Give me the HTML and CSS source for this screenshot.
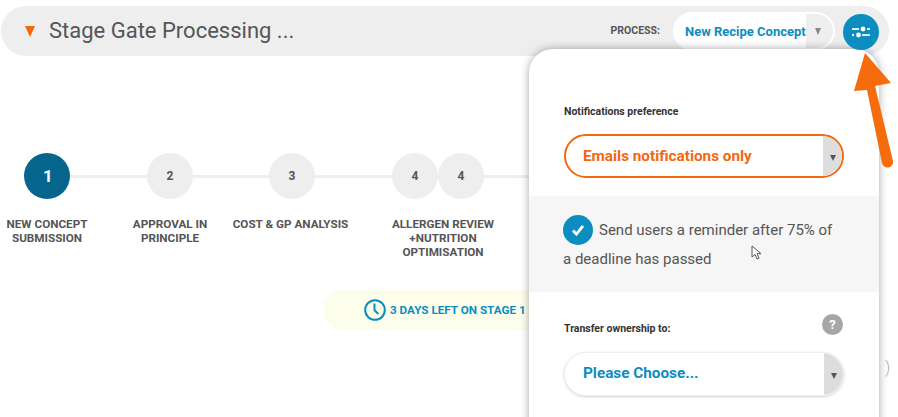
FILE: index.html
```html
<!DOCTYPE html>
<html lang="en">
<head>
<meta charset="utf-8">
<title>Stage Gate Processing</title>
<link rel="stylesheet" href="styles.css">
</head>
<body>
<div class="page">
  <header class="bar">
    <span class="caret"></span>
    <h1 class="title">Stage Gate Processing ...</h1>
    <span class="process-label">PROCESS:</span>
    <div class="process-select">
      <span class="process-value">New Recipe Concept</span>
      <span class="process-arrow"><i class="tri tri-grey"></i></span>
    </div>
    <button class="settings" aria-label="Settings">
      <svg width="18" height="12" viewBox="0 0 18 12">
        <g fill="#fff">
          <rect x="0" y="2.200" width="7" height="1.700"/>
          <circle cx="11" cy="3" r="2.400"/>
          <rect x="15" y="2.200" width="3" height="1.700"/>
          <circle cx="1" cy="9" r="1.200"/>
          <circle cx="6.500" cy="9" r="2.400"/>
          <rect x="10" y="8.200" width="8" height="1.700"/>
        </g>
      </svg>
    </button>
  </header>

  <section class="stepper">
    <div class="step step-1">
      <span class="dot dot-active">1</span>
      <span class="step-label">NEW CONCEPT SUBMISSION</span>
    </div>
    <div class="step step-2">
      <span class="dot">2</span>
      <span class="step-label">APPROVAL IN PRINCIPLE</span>
    </div>
    <div class="step step-3">
      <span class="dot">3</span>
      <span class="step-label">COST &amp; GP ANALYSIS</span>
    </div>
    <div class="step step-4">
      <div class="dot-pair"><span class="dot">4</span><span class="dot">4</span></div>
      <span class="step-label">ALLERGEN REVIEW +NUTRITION OPTIMISATION</span>
    </div>
  </section>

  <div class="deadline">
    <svg width="24" height="24" viewBox="0 0 24 24" fill="none" stroke="#0b8dc0" stroke-width="2">
      <circle cx="12" cy="12" r="9.800"/>
      <path d="M11.500 5.500v6.800l4 3.600"/>
    </svg>
    <span>3 DAYS LEFT ON STAGE 1</span>
  </div>

  <span class="edge-text">)</span>

  <aside class="panel">
    <div class="panel-block pref">
      <label class="field-label">Notifications preference</label>
      <div class="select select-orange">
        <span>Emails notifications only</span>
        <span class="select-arrow"><i class="tri tri-dark"></i></span>
      </div>
    </div>
    <div class="reminder">
      <span class="check">
        <svg width="16" height="14" viewBox="0 0 16 14"><path d="M3 7.500l3.400 3.600L13 2.800" fill="none" stroke="#fff" stroke-width="2.800"/></svg>
      </span>Send users a reminder after 75% of a deadline has passed
    </div>
    <div class="panel-block transfer">
      <div class="transfer-head">
        <label class="field-label">Transfer ownership to:</label>
        <span class="help">?</span>
      </div>
      <div class="select select-plain">
        <span>Please Choose...</span>
        <span class="select-arrow"><i class="tri tri-dark"></i></span>
      </div>
    </div>
  </aside>

  <svg class="cursor" width="12" height="16" viewBox="0 0 12 16">
    <path d="M1 1v11l3-2.600 2 4.600 2-.8-2-4.500h4z" fill="#fff" stroke="#555" stroke-width="1"/>
  </svg>

  <svg class="arrow" width="48" height="120" viewBox="0 0 48 120">
    <path d="M15 3L41 33 25 36 43 111a5.500 5.500 0 0 1-11 2L17 40 4 41z" fill="#f46c0c"/>
  </svg>
</div>
</body>
</html>
```
FILE: styles.css
```css
* { box-sizing: border-box; }
html, body { margin: 0; padding: 0; background: #fff; }
.page {
  position: relative;
  width: 898px;
  height: 417px;
  overflow: hidden;
  font-family: Roboto, "Liberation Sans", sans-serif;
  color: #555;
}
.bar {
  margin: 6px 9px 0 1px;
  height: 50px;
  border-radius: 25px;
  background: #eee;
  display: flex;
  align-items: center;
  padding: 0 10px 0 24px;
}
.caret {
  width: 0; height: 0;
  border-left: 5px solid transparent;
  border-right: 5px solid transparent;
  border-top: 11px solid #f4670f;
  margin-right: 14px;
}
.title {
  margin: 0 0 2px;
  flex: 1;
  font-size: 22px;
  font-weight: 400;
  color: #555;
}
.process-label {
  font-size: 10.5px;
  font-weight: 700;
  color: #555;
  margin: -2px 13px 0 0;
}
.process-select {
  width: 162px;
  height: 38px;
  border-radius: 19px;
  background: #fff;
  border: 2px solid #fff;
  display: flex;
  align-items: stretch;
  overflow: hidden;
  margin-right: 8px;
}
.process-value {
  flex: 1;
  font-size: 13px;
  font-weight: 700;
  color: #0b8dc0;
  line-height: 35px;
  padding-left: 10px;
  white-space: nowrap;
}
.process-arrow {
  width: 27px;
  background: #eee;
  display: flex;
  align-items: center;
  justify-content: center;
  padding-right: 4px;
}
.tri { display: block; width: 0; height: 0; border-left: 3.5px solid transparent; border-right: 3.5px solid transparent; }
.tri-grey { border-top: 7px solid #888; }
.tri-dark { border-top: 6px solid #555; }
.settings {
  position: relative;
  z-index: 2;
  width: 36px;
  height: 36px;
  border: 0;
  padding: 0;
  margin-top: 2px;
  border-radius: 50%;
  background: #0b8dc0;
  display: flex;
  align-items: center;
  justify-content: center;
}
.stepper {
  position: absolute;
  left: 0; top: 153px;
  width: 540px;
  height: 110px;
}
.stepper::before {
  content: "";
  position: absolute;
  left: 48px; right: 0; top: 22px;
  height: 3px;
  background: #eee;
}
.step {
  position: absolute;
  top: 0;
  display: flex;
  flex-direction: column;
  align-items: center;
  text-align: center;
}
.step-1 { left: 0; width: 94px; }
.step-2 { left: 123px; width: 94px; }
.step-3 { left: 229px; width: 126px; }
.step-4 { left: 387px; width: 112px; }
.dot {
  position: relative;
  flex: none;
  width: 46px;
  height: 46px;
  border-radius: 50%;
  background: #eee;
  font-size: 12px;
  font-weight: 700;
  color: #555;
  display: flex;
  align-items: center;
  justify-content: center;
  padding-bottom: 1px;
}
.dot-active { background: #05658c; color: #fff; font-size: 17px; padding-left: 2px; }
.dot-pair { display: flex; margin-left: -10px; }
.step-label {
  margin-top: 18px;
  font-size: 11.7px;
  font-weight: 700;
  line-height: 14px;
  color: #555;
}
.step-1 .step-label { width: 94px; }
.step-2 .step-label { width: 80px; }
.step-3 .step-label { margin-right: 3px; }
.step-4 .step-label { width: 112px; }
.deadline {
  position: absolute;
  left: 323px; top: 290px;
  width: 230px;
  height: 40px;
  border-radius: 20px;
  background: #fdfdec;
  display: flex;
  align-items: center;
  padding-left: 40px;
  gap: 3px;
  font-size: 11.7px;
  font-weight: 700;
  color: #0b8dc0;
  white-space: nowrap;
}
.deadline svg { flex: none; }
.edge-text {
  position: absolute;
  left: 885px; top: 358px;
  font-size: 16px;
  font-weight: 300;
  color: #aaa;
}
.panel {
  position: absolute;
  left: 529px; top: 49px;
  width: 350px;
  height: 380px;
  background: #fff;
  border-radius: 24px 24px 0 0;
  box-shadow: 0 0 8px rgba(0,0,0,.35);
}
.panel-block { padding: 0 35px; }
.pref { padding-top: 56px; height: 147px; }
.field-label {
  display: block;
  font-size: 10.5px;
  font-weight: 700;
  color: #333;
  line-height: 13px;
}
.select {
  height: 44px;
  border-radius: 22px;
  display: flex;
  align-items: stretch;
  overflow: hidden;
  font-size: 15.3px;
  font-weight: 700;
}
.select > span:first-child { flex: 1; line-height: 41px; padding-left: 17px; }
.select-arrow {
  width: 19px;
  background: #ddd;
  display: flex;
  align-items: center;
  justify-content: center;
  padding-top: 3px;
}
.select-orange {
  margin-top: 16px;
  border: 2px solid #f4670f;
  color: #f4670f;
}
.select-plain {
  margin-top: 16px;
  border: 1px solid #eee;
  color: #0b8dc0;
  box-shadow: 0 1px 3px rgba(0,0,0,.18);
}
.select-plain > span:first-child { padding-left: 18px; }
.reminder {
  height: 96px;
  background: #f6f6f6;
  padding: 20px 40px 0 34px;
  font-size: 15px;
  line-height: 28px;
  color: #555;
}
.check {
  display: inline-flex;
  vertical-align: middle;
  align-items: center;
  justify-content: center;
  width: 30px;
  height: 30px;
  border-radius: 50%;
  background: #0b8dc0;
  margin-right: 6px;
  margin-top: -2px;
}
.transfer { padding-top: 22px; }
.transfer-head {
  display: flex;
  justify-content: space-between;
  align-items: flex-end;
  height: 22px;
}
.transfer-head .field-label { margin-bottom: 1px; }
.help {
  align-self: flex-start;
  width: 21px;
  height: 21px;
  margin-right: 1px;
  border-radius: 50%;
  background: #a6a6a6;
  color: #fff;
  font-size: 13px;
  font-weight: 700;
  display: flex;
  align-items: center;
  justify-content: center;
}
.cursor { position: absolute; left: 751px; top: 245px; }
.arrow { position: absolute; left: 850px; top: 50px; }
```
